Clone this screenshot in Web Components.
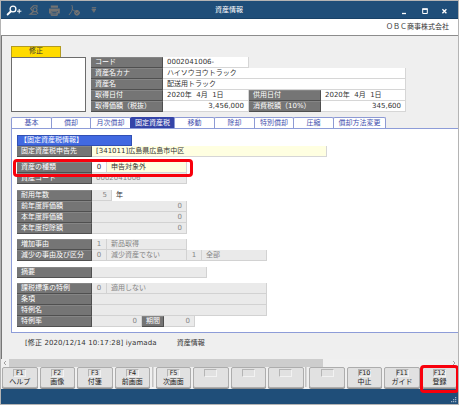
<!DOCTYPE html>
<html lang="ja"><head><meta charset="utf-8"><title>資産情報</title>
<style>
body{margin:0;font:7px/11px "DejaVu Sans","Noto Sans CJK JP",sans-serif;color:#333}
</style></head><body><asset-window></asset-window>
<script>
const define=(name,html,setup)=>customElements.define(name,class extends HTMLElement{
  connectedCallback(){
    if(this.shadowRoot)return;
    const t=document.createElement('template');
    t.innerHTML=html;
    this.attachShadow({mode:'open'}).append(t.content.cloneNode(true));
    const w=this.getAttribute('w');
    if(w)this.style.width=w+'px';
    if(setup)setup(this,this.shadowRoot);
  }
});

define('field-label',`<style>
:host{display:block;box-sizing:border-box;flex:none;height:11px;padding-left:4px;background:#757575;color:#fff;border-bottom:1px solid #4f4f4f;border-right:1px solid #4f4f4f;border-top:1px solid #858585;line-height:9px;white-space:nowrap;overflow:hidden}
</style><slot></slot>`);

define('field-value',`<style>
:host{display:block;box-sizing:border-box;flex:none;height:11px;padding:0 4px;background:#fff;border:solid #d6d6d6;border-width:0 1px 1px 0;line-height:10px;white-space:pre;overflow:hidden;color:#333}
:host([off]){background:#eaeaea;color:#858585;border-color:#d2d2d2}
:host([hint]){background:#ffffe1}
:host([right]){text-align:right}
:host([center]){text-align:center;padding:0}
</style><slot></slot>`);

define('form-row',`<style>
:host{display:flex;height:11px}
:host([gap]){margin-top:5.5px}
</style><slot></slot>`);

define('tool-bar',`<style>
:host{display:flex;align-items:center;height:18px;box-sizing:border-box;background:#1f4e79;color:#fff;padding:2px 11px 0 5px;border-bottom:1px solid #184167}
.icons,.win{display:flex;align-items:center;width:105px}
.win{justify-content:flex-end}
.title{flex:1;text-align:center;padding-left:5px}
svg{display:block;fill:none;stroke-linecap:round}
</style>
<div class="icons">
<svg width="95" height="14" viewBox="0 0 95 14">
<g stroke="#fff"><circle cx="7" cy="5" r="2.9" stroke-width="1.3"/><path d="M4.7 7.5 1.6 10.5" stroke-width="1.8"/><path d="M11.4 7.2h3.6M13.2 5.4v3.6" stroke-width="1"/></g>
<g stroke="#737373" stroke-width="1.1"><path d="M30.4 10.3 24 10.3 27.2 7.8 24.6 4.6 27.4 1.8H31v1.4"/><circle cx="29" cy="5.7" r="2"/><path d="m30.3 7.3 1.5 2"/></g>
<g fill="#737373"><path d="M44.8 1.5h7.2v2.3h-7.2zM43 4.5h10.8v5H52V7H45v2.5h-2z"/><path d="M45.5 7.8h5.8v3.5h-5.8z" stroke="#737373"/><path d="M46.7 8.5h3.4M46.7 10h3.4" stroke="#1f4e79" stroke-width=".7"/></g>
<g stroke="#737373" stroke-width="1"><path d="M66 1.5c.7 2 .7 4-.5 6L63.2 10.7M66.2 5c.8 1.3 1.7 1.7 3 2"/><circle cx="71" cy="8.8" r="2.4" fill="#737373"/><path d="m69.8 8.8 1 .9 1.5-1.7" stroke="#1f4e79" stroke-width=".8"/></g>
<path d="M86.2 3.5h3.6M86.2 5h3.6l-1.8 3z" stroke="#737373" stroke-width=".8" fill="#737373"/>
</svg></div><div class="title">資産情報</div>
<div class="win"><svg width="48" height="10" viewBox="0 0 48 10" stroke="#fff" style="stroke-linecap:butt"><path d="M3 7.5h4" stroke-width="1.3"/><path d="M23.7 3.2h4.6v4.3h-4.6z"/><path d="M23.2 3h5.6" stroke-width="1.5"/><path d="m43.4 3.2 4 4m0-4-4 4" stroke-width="1.3"/></svg></div>`);

define('tab-item',`<style>
:host{display:block;box-sizing:border-box;flex:none;height:11px;background:#fff;color:#3f4fae;border:1px solid #8d9ad4;border-bottom:0;border-radius:2px 2px 0 0;margin-right:-1px;text-align:center;line-height:10px;white-space:nowrap}
:host([active]){background:#3444a8;border-color:#3444a8;color:#fff}
</style><slot></slot>`);

define('fn-key',`<style>
:host{display:flex;flex-direction:column;align-items:center;box-sizing:border-box;flex:none;width:35.5px;height:21px;background:#e1e1e1;border:1px solid #adadad;border-radius:2px;color:#222;box-shadow:0 1px #8f8f8f;padding-top:1px}
.key{box-sizing:border-box;width:13px;height:8px;border:1px solid #b5b5b5;border-color:#b5b5b5 #f2f2f2 #f2f2f2 #b5b5b5;font-size:6.5px;line-height:7px;display:flex;justify-content:center;letter-spacing:-.2px;white-space:nowrap}
.name{line-height:10px;white-space:nowrap}
</style><div class="key"><span></span></div><div class="name"><slot></slot></div>`,(el,r)=>{r.querySelector('span').textContent=el.getAttribute('key')||''});

define('key-divider',`<style>:host{display:block;flex:none;box-sizing:border-box;width:2px;height:20px;margin:0 -.2px;border-left:1px solid #c4c4c4;border-right:1px solid #d8d8d8}</style>`);

define('scroll-strip',`<style>
:host{display:flex;height:8px;background:#f0f0f0;justify-content:space-between}
.thumb{width:314px;background:#cdcdcd;margin-right:auto}
svg{width:8px;height:8px;fill:none;stroke:#a0a0a0}
</style><svg viewBox="0 0 8 8"><path d="M5 2 3 4l2 2"/></svg><div class="thumb"></div><svg viewBox="0 0 8 8"><path d="m3 2 2 2-2 2"/></svg>`);

define('marker-box',`<style>:host{display:block;position:absolute;box-sizing:border-box;border:3px solid #f8000c;border-radius:4px;pointer-events:none}</style>`);

define('asset-window',`<style>
:host{display:flex;flex-direction:column;position:relative;box-sizing:border-box;width:459px;height:405px;border:1px solid #b4b4b4;background:#efefef;overflow:hidden}
.company{height:17px;box-sizing:border-box;background:#fff;text-align:right;padding:2.5px 9px 0 0;border-bottom:1px solid #8c8c8c}
.work{height:323px;box-sizing:border-box;border-left:1px solid #777;padding:10px 0 0 9px}
.mode{width:50px;height:11px;box-sizing:border-box;border:1px solid #b39b20;border-bottom:0;background:#ffdb00;text-align:center;line-height:9px}
.summary{display:flex;gap:5px}
.photo{width:75px;height:55px;box-sizing:border-box;border:1px solid #6c6c6c;background:#fff}
.tabs{display:flex;margin-top:5px}
.panel{box-sizing:border-box;height:205px;background:#fff;border:1px solid #8d9cd8;border-right:0;padding:6px 0 0 5px}
.section{width:115px;height:10.5px;box-sizing:border-box;background:#4169e1;border:1px solid #3150b4;color:#fff;padding-left:2px;line-height:8.5px}
.unit{padding-left:4px;line-height:10px}
.log{display:flex;gap:20px;padding:5px 0 0 14px;white-space:pre}
.log span:first-child{letter-spacing:.11px}
.keys{display:flex;gap:2px;height:22px;flex:none;box-sizing:border-box;background:#f0f0f0;padding:0 0 0 1px}
.foot{flex:1;background:#1f4e79;display:flex;justify-content:flex-end;align-items:flex-end}
</style>
<tool-bar></tool-bar>
<div class="company">ＯＢＣ商事株式会社</div>
<div class="work">
<div class="mode">修正</div>
<div class="summary"><div class="photo"></div><div>
<form-row><field-label w="72">コード</field-label><field-value w="86">0002041006-</field-value></form-row>
<form-row><field-label w="72">資産名カナ</field-label><field-value w="243">ハイソウヨウトラック</field-value></form-row>
<form-row><field-label w="72">資産名</field-label><field-value w="243">配送用トラック</field-value></form-row>
<form-row><field-label w="72">取得日付</field-label><field-value w="86">2020年  4月  1日</field-value><field-label w="72">供用日付</field-label><field-value w="85">2020年  4月  1日</field-value></form-row>
<form-row><field-label w="72">取得価額（税抜）</field-label><field-value w="86" right>3,456,000</field-value><field-label w="72">消費税額（10%）</field-label><field-value w="85" right>345,600</field-value></form-row>
</div></div>
<div class="tabs"><tab-item w="41">基本</tab-item><tab-item w="40">償却</tab-item><tab-item w="41">月次償却</tab-item><tab-item w="45" active>固定資産税</tab-item><tab-item w="41">移動</tab-item><tab-item w="41">除却</tab-item><tab-item w="40">特別償却</tab-item><tab-item w="41">圧縮</tab-item><tab-item w="53">償却方法変更</tab-item></div>
<div class="panel">
<div class="section">【固定資産税情報】</div>
<form-row><field-label w="75">固定資産税申告先</field-label><field-value w="235" hint>[341011]広島県広島市中区</field-value></form-row>
<form-row gap><field-label w="75">資産の種類</field-label><field-value w="15" center>0</field-value><field-value w="80" hint>申告対象外</field-value></form-row>
<form-row><field-label w="75">資産コード</field-label><field-value w="95" off>0002041006</field-value></form-row>
<form-row gap><field-label w="75">耐用年数</field-label><field-value w="20" off right>5</field-value><span class="unit">年</span></form-row>
<form-row><field-label w="75">前年度評価額</field-label><field-value w="95" off right>0</field-value></form-row>
<form-row><field-label w="75">本年度評価額</field-label><field-value w="95" off right>0</field-value></form-row>
<form-row><field-label w="75">本年度控除額</field-label><field-value w="95" off right>0</field-value></form-row>
<form-row gap><field-label w="75">増加事由</field-label><field-value w="15" off center>1</field-value><field-value w="80" off>新品取得</field-value></form-row>
<form-row><field-label w="75">減少の事由及び区分</field-label><field-value w="15" off center>0</field-value><field-value w="80" off>減少資産でない</field-value><field-value w="15" off center>1</field-value><field-value w="65" off>全部</field-value></form-row>
<form-row gap><field-label w="75">摘要</field-label><field-value w="115" off></field-value></form-row>
<form-row gap><field-label w="75">課税標準の特例</field-label><field-value w="15" off center>0</field-value><field-value w="160" off>適用しない</field-value></form-row>
<form-row><field-label w="75">条項</field-label><field-value w="175" off></field-value></form-row>
<form-row><field-label w="75">特例名</field-label><field-value w="175" off></field-value></form-row>
<form-row><field-label w="75">特例率</field-label><field-value w="50" off right>0</field-value><field-label w="22">期間</field-label><field-value w="31" off right>0</field-value></form-row>
</div>
<div class="log"><span>[修正 2020/12/14 10:17:28] iyamada</span><span>資産情報</span></div>
</div>
<scroll-strip></scroll-strip>
<div class="keys"><fn-key key="F1">ヘルプ</fn-key><fn-key key="F2">画像</fn-key><fn-key key="F3">付箋</fn-key><fn-key key="F4">前画面</fn-key><key-divider></key-divider><fn-key key="F5">次画面</fn-key><fn-key></fn-key><fn-key></fn-key><fn-key></fn-key><key-divider></key-divider><fn-key></fn-key><fn-key key="F10">中止</fn-key><fn-key key="F11">ガイド</fn-key><fn-key key="F12">登録</fn-key></div>
<div class="foot"><svg width="8" height="8" viewBox="0 0 8 8" fill="#9db1c6"><path d="M5 1h1.3v1.3H5zM3 3h1.3v1.3H3zM5 3h1.3v1.3H5zM1 5h1.3v1.3H1zM3 5h1.3v1.3H3zM5 5h1.3v1.3H5z"/></svg></div>
<marker-box style="left:12px;top:158px;width:180px;height:18px"></marker-box>
<marker-box style="left:419px;top:364px;width:39px;height:28px"></marker-box>`);
</script></body></html>
